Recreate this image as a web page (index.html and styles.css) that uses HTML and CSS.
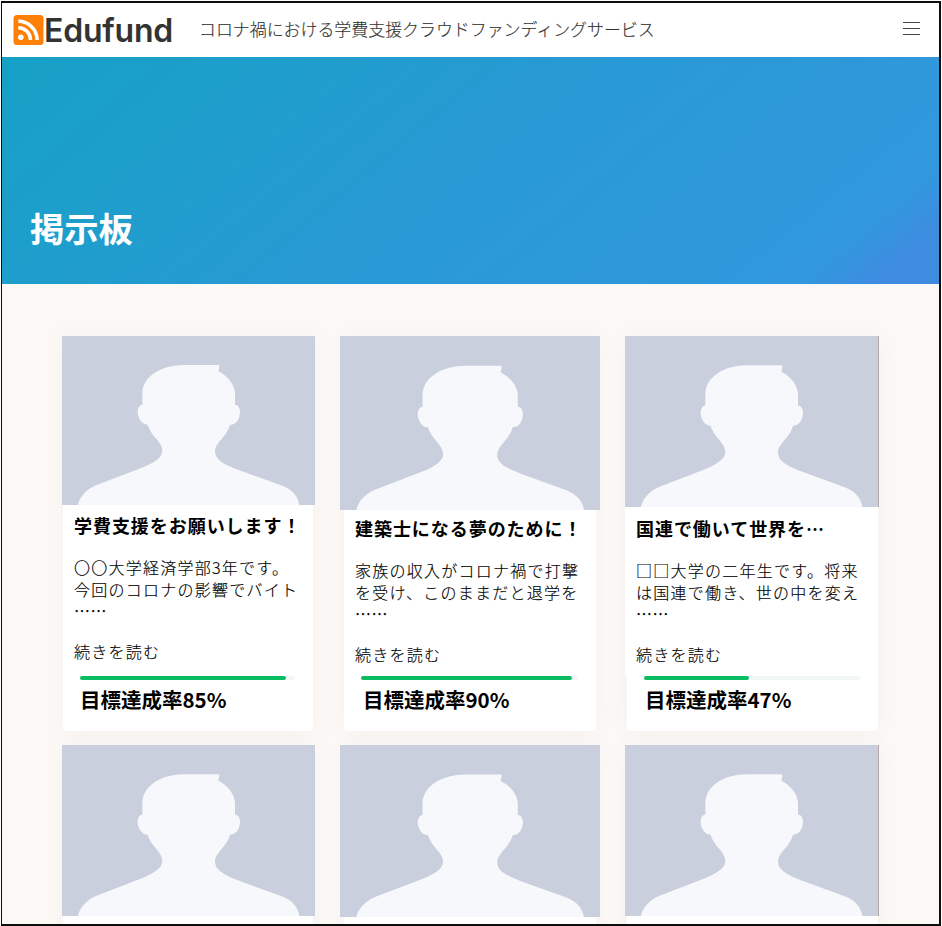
FILE: index.html
```html
<!DOCTYPE html>
<html lang="ja">
<head>
<meta charset="utf-8">
<title>Edufund</title>
<link rel="stylesheet" href="styles.css">
</head>
<body>
<svg class="defs" aria-hidden="true">
  <symbol id="person" viewBox="0 0 759 507" preserveAspectRatio="none">
    <path d="M365 87H469Q473 87 472 91L469 106C500 121 518 148 519 172V206C533 208 537 224 532 242C527 258 517 266 504 266C494 303 460 318 459 345C459 370 480 383 530 402L663 450C693 462 709 484 712 507H48C52 484 72 461 102 448L240 395C285 377 300 362 301 345C301 316 268 303 257 266C243 266 233 255 228 238C225 221 229 208 241 206V172C242 120 300 87 365 87Z"/>
  </symbol>
</svg>
<div class="frame">
  <header class="header">
    <svg class="logo" viewBox="0 0 30 30">
      <rect width="30" height="30" rx="3.5" fill="#ff8008"/>
      <circle cx="7.3" cy="22.3" r="2.8" fill="#fff"/>
      <path d="M4.8 12.7A12.2 12.2 0 0 1 17 24.9M4.8 6.2A18.8 18.8 0 0 1 23.6 24.9" fill="none" stroke="#fff" stroke-width="3.5"/>
    </svg>
    <span class="brand">Edufund</span>
    <span class="tagline">コロナ禍における学費支援クラウドファンディングサービス</span>
    <div class="menu"><i></i><i></i><i></i></div>
  </header>
  <section class="hero"><h1>掲示板</h1></section>
  <main class="grid">
    <article class="card first">
      <svg class="photo"><use href="#person"/></svg>
      <div class="content">
        <h2>学費支援をお願いします！</h2>
        <p>〇〇大学経済学部3年です。<br>今回のコロナの影響でバイト</p>
        <p class="dots">……</p>
        <a>続きを読む</a>
      </div>
      <div class="goal">
        <div class="bar"><div class="fill" style="width:96%"></div></div>
        <strong>目標達成率85%</strong>
      </div>
    </article>
    <article class="card second">
      <svg class="photo"><use href="#person"/></svg>
      <div class="content">
        <h2>建築士になる夢のために！</h2>
        <p>家族の収入がコロナ禍で打撃<br>を受け、このままだと退学を</p>
        <p class="dots">……</p>
        <a>続きを読む</a>
      </div>
      <div class="goal">
        <div class="bar"><div class="fill" style="width:97.3%"></div></div>
        <strong>目標達成率90%</strong>
      </div>
    </article>
    <article class="card third">
      <svg class="photo"><use href="#person"/></svg>
      <div class="content">
        <h2>国連で働いて世界を…</h2>
        <p>□□大学の二年生です。将来<br>は国連で働き、世の中を変え</p>
        <p class="dots">……</p>
        <a>続きを読む</a>
      </div>
      <div class="goal">
        <div class="bar"><div class="fill" style="width:48.2%"></div></div>
        <strong>目標達成率47%</strong>
      </div>
    </article>
    <article class="card first lower"><svg class="photo"><use href="#person"/></svg></article>
    <article class="card second lower"><svg class="photo"><use href="#person"/></svg></article>
    <article class="card third lower"><svg class="photo"><use href="#person"/></svg></article>
  </main>
</div>
</body>
</html>
```
FILE: styles.css
```css
* { box-sizing: border-box; }
html { background: #fff; }
body {
  margin: 0;
  padding: 1px 1px 0;
  height: 926px;
  overflow: hidden;
  font-family: "Noto Sans CJK JP", sans-serif;
  color: #000;
}
.defs { display: none; }
.frame {
  height: 925px;
  border: 2px solid #0c0e0d;
  border-left-width: 1px;
  overflow: hidden;
  background: #fcf8f5;
}
.header {
  display: flex;
  align-items: center;
  height: 54px;
  padding: 0 19px 0 11px;
  background: #fff;
}
.logo { width: 31px; height: 30px; flex: none; }
.brand {
  width: 155px;
  padding-top: 2px;
  font: 600 32px/54px Inter, sans-serif;
  letter-spacing: -.2px;
  color: #333;
  white-space: nowrap;
}
.tagline {
  padding-bottom: 2px;
  font-size: 16.93px;
  line-height: 54px;
  font-weight: 300;
  color: #333;
  -webkit-text-stroke: .15px #333;
  white-space: nowrap;
}
.menu {
  display: flex;
  flex-direction: column;
  gap: 5px;
  width: 17px;
  margin: 0 0 3px auto;
}
.menu i { height: 1px; background: #444; }
.hero {
  height: 227px;
  padding: 142px 28px 0;
  background: linear-gradient(140deg, #16a0c6 0%, #1c9fca 18%, #279ad3 45%, #3198de 88%, #3f8be0 95%, #3f8be0 100%);
}
.hero h1 {
  margin: 0;
  font-size: 34.3px;
  line-height: 56px;
  font-weight: 700;
  color: #fff;
}
.grid {
  display: grid;
  grid-template-columns: 250px 252px 251px;
  grid-template-rows: 395px 395px;
  column-gap: 31px;
  row-gap: 14px;
  padding: 52px 0 0 61px;
}
.card {
  display: flex;
  flex-direction: column;
  background: #fff;
  border-radius: 4px;
  box-shadow: 0 0 22px rgba(90, 120, 110, .05);
}
.photo {
  display: block;
  flex: none;
  width: 253px;
  height: 169px;
  margin-left: -1px;
  background: #c9cfdc;
  fill: #f7f8fb;
}
.second .photo { width: 260px; height: 174px; margin-left: -4px; }
.third .photo { width: 254px; height: 171px; margin-left: -2px; border-right: 1px solid #b5a7a3; }
.third .content { margin-left: -2px; padding-bottom: 10px; background: #fff; }
.lower .photo { height: 171px; }
.lower.second .photo { height: 172px; }
.content { padding: 7px 0 0 11px; white-space: nowrap; }
.second .content { padding-top: 5px; }
.third .content { padding-top: 8px; }
.content h2 {
  margin: 0 0 18px;
  font-size: 18px;
  line-height: 26px;
  letter-spacing: .95px;
  font-weight: 700;
}
.content p, .content a {
  display: block;
  margin: 0;
  font-size: 16px;
  line-height: 22px;
  letter-spacing: 1.25px;
  font-weight: 300;
  -webkit-text-stroke: .15px #000;
}
.content .dots { height: 22px; line-height: 20px; margin-bottom: 18px; font-weight: 400; letter-spacing: .6px; }
.goal { margin-top: auto; padding: 0 18px 15px 17px; }
.third .goal { padding-right: 17px; }
.bar { height: 4px; border-radius: 2px; background: #f2f7f6; }
.fill { height: 4px; border-radius: 2px; background: #0abd62; }
.goal strong {
  display: block;
  height: 36px;
  font-size: 20.5px;
  line-height: 38px;
  font-weight: 700;
}
.second .goal strong { padding-left: 2px; }
.third .goal strong { padding-left: 1px; }
```
